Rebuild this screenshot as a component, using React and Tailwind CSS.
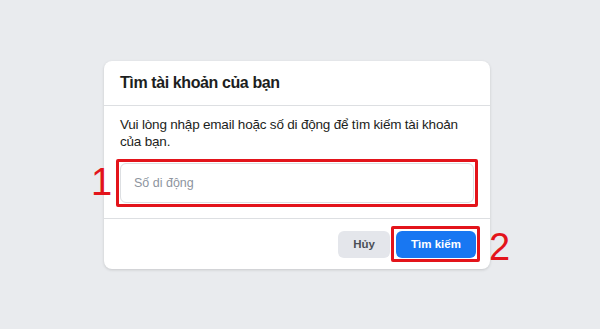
export default function App() {
  return (
    <div
      className="min-h-screen w-full bg-[#e9ebee] pt-[61px] pl-[104px]"
      style={{ fontFamily: '"Liberation Sans", Arial, sans-serif' }}
    >
      <div className="w-[386px] bg-white rounded-lg shadow-[0_1px_3px_rgba(0,0,0,0.15)]">
        <div className="h-[45px] px-4 flex items-center border-b border-[#dddfe2]">
          <h2 className="text-[16px] tracking-[-0.4px] font-bold text-[#1c1e21]">Tìm tài khoản của bạn</h2>
        </div>

        <div className="px-4 pt-[10px] pb-[15px]">
          <p className="text-[13.5px] tracking-[-0.2px] leading-[17px] text-[#1c1e21]">
            Vui lòng nhập email hoặc số di động để tìm kiếm tài khoản của bạn.
          </p>
          <div className="relative mt-[13px]">
            <input
              placeholder="Số di động"
              className="w-full h-[40px] px-[13px] rounded-md border border-[#dddfe2] text-[12.5px] text-[#1c1e21] placeholder:text-[#8d949e] outline-none"
            />
            <div className="absolute -inset-[4px] border-[3px] border-[#e3141b] rounded-[2px] pointer-events-none" />
            <span className="absolute left-[-29px] top-[-3px] text-[38px] leading-[44px] text-[#e3141b]">1</span>
          </div>
        </div>

        <div className="border-t border-[#dddfe2] pt-[12px] pb-[11px] pr-[14px] flex justify-end gap-[6px]">
          <button className="h-[27px] w-[52px] rounded-md bg-[#e4e6eb] text-[11.5px] font-bold text-[#4b4f56]">
            Hủy
          </button>
          <div className="relative">
            <button className="h-[27px] w-[80px] rounded-md bg-[#1877f2] text-[11.5px] font-bold text-white">
              Tìm kiếm
            </button>
            <div className="absolute -left-[5px] -right-[4px] -top-[5px] -bottom-[4px] border-[3px] border-[#e3141b] rounded-[2px] pointer-events-none" />
            <span className="absolute left-[93px] top-[-6px] text-[38px] leading-[44px] text-[#e3141b]">2</span>
          </div>
        </div>
      </div>
    </div>
  );
}
